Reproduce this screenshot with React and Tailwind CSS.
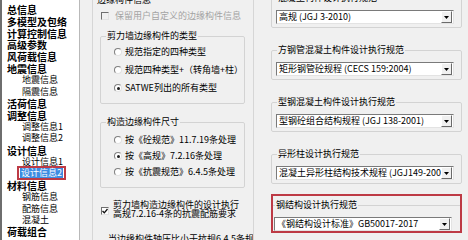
import React from 'react';

const tree = [
  { label: '总信息', level: 0 },
  { label: '多模型及包络', level: 0 },
  { label: '计算控制信息', level: 0 },
  { label: '高级参数', level: 0 },
  { label: '风荷载信息', level: 0 },
  { label: '地震信息', level: 0 },
  { label: '地震信息', level: 1 },
  { label: '隔震信息', level: 1 },
  { label: '活荷信息', level: 0 },
  { label: '调整信息', level: 0 },
  { label: '调整信息1', level: 1 },
  { label: '调整信息2', level: 1 },
  { label: '设计信息', level: 0 },
  { label: '设计信息1', level: 1 },
  { label: '设计信息2', level: 1, selected: true },
  { label: '材料信息', level: 0 },
  { label: '钢筋信息', level: 1 },
  { label: '配筋信息', level: 1 },
  { label: '混凝土', level: 1 },
  { label: '荷载组合', level: 0 },
];

const codes = [
  { label: '混凝土构件设计执行规范', value: '高规 (JGJ 3-2010)' },
  { label: '方钢管混凝土构件设计执行规范', value: '矩形钢管砼规程 (CECS 159:2004)' },
  { label: '型钢混凝土构件设计执行规范', value: '型钢砼组合结构规程 (JGJ 138-2001)' },
  { label: '异形柱设计执行规范', value: '混凝土异形柱结构技术规程 (JGJ149-2006)' },
];

function TreePanel() {
  return (
    <div className="h-full w-[80px] shrink-0 border-l-2 border-r border-l-[#6e6e6e] border-r-[#b9b9b9] bg-white pt-[4px]">
      {tree.map((item, i) => (
        <div
          key={i}
          className={
            item.level === 0
              ? 'flex h-[11.7px] items-center whitespace-nowrap pl-[5px] text-[10px] font-bold leading-[11px]'
              : 'flex h-[11.7px] items-center whitespace-nowrap pl-[15px] text-[9px] leading-[10px]'
          }
        >
          {item.selected ? (
            <span className="flex h-[14px] items-center border-2 border-[#bd3a45] px-[1px]">
              <span className="bg-[#3c8ce2] px-[1px] leading-[10px] text-white">{item.label}</span>
            </span>
          ) : (
            <span className={item.level === 1 ? 'pl-[5px]' : ''}>{item.label}</span>
          )}
        </div>
      ))}
    </div>
  );
}

function Radio({ checked, children, h = 'h-[18px]' }) {
  return (
    <div className={`flex ${h} items-center whitespace-nowrap`}>
      <span className="ml-[13px] flex h-[8px] w-[8px] items-center justify-center rounded-full border border-b-[#e2e2e2] border-l-[#7f7f7f] border-r-[#e2e2e2] border-t-[#7f7f7f] bg-white">
        {checked && <span className="h-[3px] w-[3px] rounded-full bg-[#1e1e1e]" />}
      </span>
      <span className="ml-[3px] leading-[12px]">{children}</span>
    </div>
  );
}

function Checkbox({ checked, disabled }) {
  return (
    <span
      className={`flex h-[8px] w-[8px] shrink-0 items-center justify-center border border-b-[#e2e2e2] border-l-[#6f6f6f] border-r-[#e2e2e2] border-t-[#6f6f6f] ${
        disabled ? 'bg-[#f0f0f0]' : 'bg-white'
      }`}
    >
      {checked && (
        <svg width="6" height="6" viewBox="0 0 6 6">
          <path d="M0.5 3 L2.3 4.8 L5.5 1" fill="none" stroke="#111" strokeWidth="1.3" />
        </svg>
      )}
    </span>
  );
}

function MiddlePanel() {
  return (
    <div className="h-full w-[174px] shrink-0 pl-[12px]">
      <div className="flex h-full flex-col overflow-hidden border-x border-[#d6d6d6]">
        <div className="-mt-[6px] h-[12px] whitespace-nowrap pl-[4px] leading-[12px]">边缘构件信息</div>
        <div className="mt-[4px] flex h-[12px] items-center whitespace-nowrap pl-[8px] leading-[12px] text-[#a3a3a3]">
          <Checkbox disabled />
          <span className="ml-[6px]">保留用户自定义的边缘构件信息</span>
        </div>
        <fieldset className="ml-[7px] mt-[8px] w-[145px] shrink-0 rounded-[2px] border border-[#d3d3d3] pb-[6px]">
          <legend className="ml-[5px] h-[12px] whitespace-nowrap px-[1px] leading-[12px]">剪力墙边缘构件的类型</legend>
          <div className="pt-[1px]">
            <Radio>规范指定的四种类型</Radio>
            <Radio>规范四种类型+（转角墙+柱）</Radio>
            <Radio checked>SATWE列出的所有类型</Radio>
          </div>
        </fieldset>
        <fieldset className="ml-[7px] mt-[12px] w-[145px] shrink-0 rounded-[2px] border border-[#d3d3d3] pb-[7px]">
          <legend className="ml-[5px] h-[12px] whitespace-nowrap px-[1px] leading-[12px]">构造边缘构件尺寸</legend>
          <div className="pt-[4px]">
            <Radio h="h-[16px]">按《砼规范》11.7.19条处理</Radio>
            <Radio h="h-[16px]" checked>按《高规》7.2.16条处理</Radio>
            <Radio h="h-[16px]">按《抗震规范》6.4.5条处理</Radio>
          </div>
        </fieldset>
        <div className="mt-[12px] flex shrink-0 pl-[8px]">
          <span className="mt-[7px]">
            <Checkbox checked />
          </span>
          <div className="ml-[4px] whitespace-nowrap leading-[9px]">
            剪力墙构造边缘构件的设计执行
            <br />
            高规7.2.16-4条的抗震配筋要求
          </div>
        </div>
        <div className="mt-[15px] h-[12px] shrink-0 whitespace-nowrap pl-[15px] leading-[12px]">
          当边缘构件轴压比小于抗规6.4.5条规定
        </div>
      </div>
    </div>
  );
}

function Combo({ value }) {
  return (
    <div className="flex h-[14px] w-[178px] items-center border border-b-[#e3e3e3] border-l-[#7a7a7a] border-r-[#e3e3e3] border-t-[#7a7a7a] bg-white">
      <span className="min-w-0 flex-1 overflow-hidden whitespace-nowrap pl-[2px] leading-[12px]">{value}</span>
      <span className="mr-[1px] flex h-[12px] w-[11px] shrink-0 items-center justify-center border border-b-[#6a6a6a] border-l-white border-r-[#6a6a6a] border-t-white bg-[#f0f0f0]">
        <svg width="5" height="3" viewBox="0 0 5 3">
          <path d="M0 0 H5 L2.5 3 Z" fill="#000" />
        </svg>
      </span>
    </div>
  );
}

function RightPanel() {
  return (
    <div className="-mt-[8px] flex min-w-0 flex-1 flex-col pl-[17px]">
      {codes.map((c, i) => (
        <fieldset
          key={i}
          className="mb-[16px] h-[36px] w-[191px] shrink-0 rounded-[2px] border border-[#d3d3d3]"
        >
          <legend className="ml-[5px] h-[12px] whitespace-nowrap px-[1px] leading-[12px]">{c.label}</legend>
          <div className="ml-[4px] mt-[6px]">
            <Combo value={c.value} />
          </div>
        </fieldset>
      ))}
      <div className="-mt-[6px] h-[39px] w-[191px] shrink-0 border-2 border-[#bd3a45]">
        <fieldset className="mt-[3px] border-t border-[#d3d3d3]">
          <legend className="ml-[2px] h-[12px] whitespace-nowrap px-[1px] leading-[12px]">钢结构设计执行规范</legend>
          <div className="ml-[1px] mt-[6px]">
            <Combo value="《钢结构设计标准》GB50017-2017" />
          </div>
        </fieldset>
      </div>
    </div>
  );
}

export default function App() {
  return (
    <div className="flex h-[240px] w-[468px] overflow-hidden bg-[#f0f0f0] font-['Noto_Sans_CJK_SC','Noto_Sans',sans-serif] text-[9px] text-black">
      <TreePanel />
      <MiddlePanel />
      <RightPanel />
    </div>
  );
}
